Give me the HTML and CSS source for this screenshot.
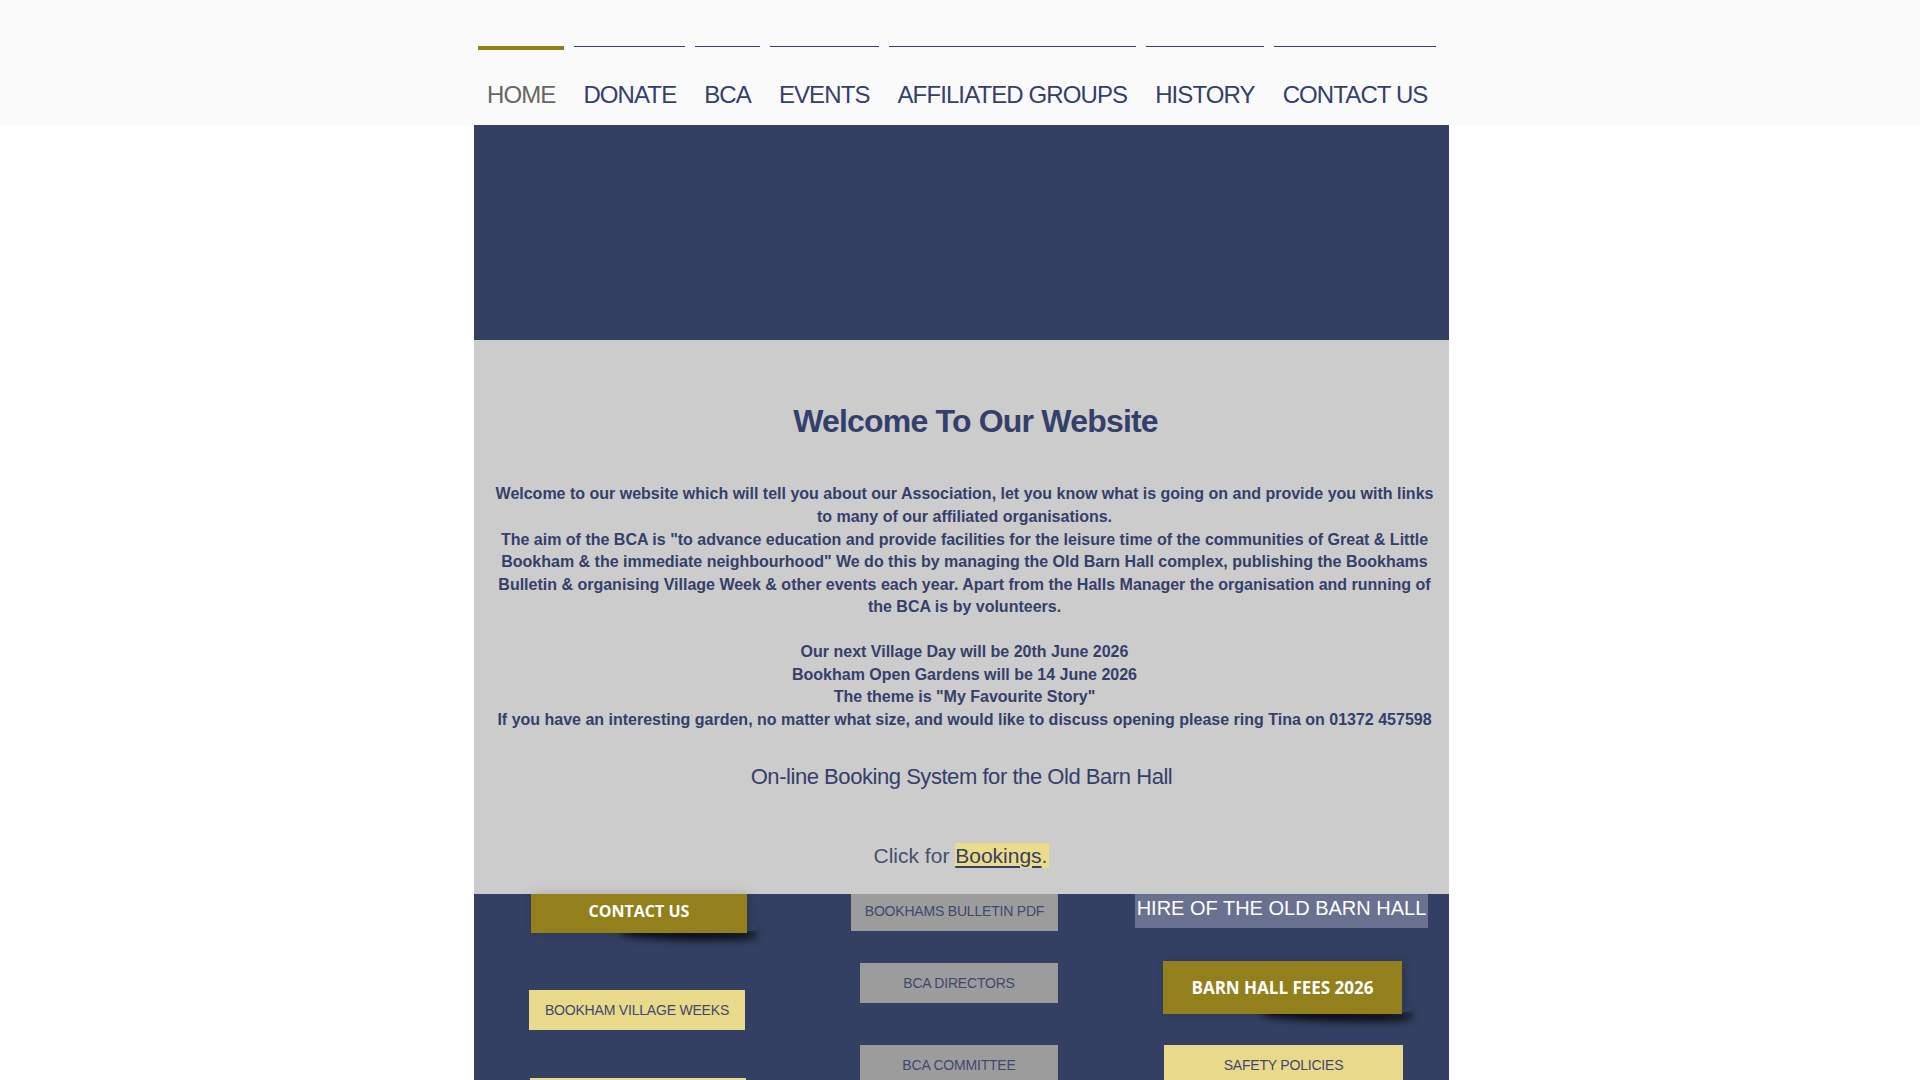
FILE: index.html
```html
<!DOCTYPE html>
<html lang="en">
<head>
<meta charset="utf-8">
<title>Bookham Community Association</title>
<link rel="stylesheet" href="styles.css">
</head>
<body>
<header class="site-header">
  <nav class="nav">
    <a class="nav-item active" href="#">HOME</a>
    <a class="nav-item" href="#">DONATE</a>
    <a class="nav-item" href="#">BCA</a>
    <a class="nav-item" href="#">EVENTS</a>
    <a class="nav-item" href="#">AFFILIATED GROUPS</a>
    <a class="nav-item" href="#">HISTORY</a>
    <a class="nav-item" href="#">CONTACT US</a>
  </nav>
</header>
<main class="page">
  <section class="hero"></section>
  <section class="welcome">
    <h1 class="welcome-title">Welcome To Our Website</h1>
    <p class="intro">Welcome to our website which will tell you about our Association, let you know what is going on and provide you with links<br>to many of our affiliated organisations.<br>The aim of the BCA is "to advance education and provide facilities for the leisure time of the communities of Great &amp; Little<br>Bookham &amp; the immediate neighbourhood" We do this by managing the Old Barn Hall complex, publishing the Bookhams<br>Bulletin &amp; organising Village Week &amp; other events each year. Apart from the Halls Manager the organisation and running of<br>the BCA is by volunteers.<br><br>Our next Village Day will be 20th June 2026<br>Bookham Open Gardens will be 14 June 2026<br>The theme is "My Favourite Story"<br>If you have an interesting garden, no matter what size, and would like to discuss opening please ring Tina on 01372 457598</p>
    <p class="booking-title">On-line Booking System for the Old Barn Hall</p>
    <p class="booking-link">Click for <a class="booking-anchor" href="#">Bookings</a><span class="booking-dot">.</span></p>
  </section>
  <section class="links">
    <div class="col col-1">
      <a class="btn btn-gold btn-contact" href="#">CONTACT US</a>
      <a class="btn btn-yellow btn-weeks" href="#">BOOKHAM VILLAGE WEEKS</a>
      <a class="btn btn-yellow btn-next" href="#"></a>
    </div>
    <div class="col col-2">
      <a class="btn btn-grey btn-bulletin" href="#">BOOKHAMS BULLETIN PDF</a>
      <a class="btn btn-grey btn-directors" href="#">BCA DIRECTORS</a>
      <a class="btn btn-grey btn-committee" href="#">BCA COMMITTEE</a>
    </div>
    <div class="col col-3">
      <div class="hire">HIRE OF THE OLD BARN HALL</div>
      <a class="btn btn-gold btn-fees" href="#">BARN HALL FEES 2026</a>
      <a class="btn btn-yellow btn-safety" href="#">SAFETY POLICIES</a>
    </div>
  </section>
</main>
</body>
</html>
```
FILE: styles.css
```css
html, body {
  margin: 0;
  padding: 0;
  background: #ffffff;
  font-family: "Liberation Sans", Arial, sans-serif;
  overflow: hidden;
}

.site-header {
  background: #fafafa;
  height: 125px;
}

.nav {
  width: 975px;
  margin-left: calc(50% - 486px);
  box-sizing: border-box;
  padding: 46px 0 0 4px;
  display: flex;
  gap: 10px;
}

.nav-item {
  display: block;
  border-top: 1px solid #34406b;
  padding: 33px 9px 0 9px;
  font-size: 24px;
  line-height: 30px;
  letter-spacing: -0.9px;
  color: #34406b;
  text-decoration: none;
  white-space: nowrap;
}

.nav-item.active {
  border-top-color: #937f1b;
  box-shadow: inset 0 3px 0 #937f1b;
  color: #666666;
}

.page {
  width: 975px;
  margin-left: calc(50% - 486px);
}

.hero {
  height: 215px;
  background: #344063;
}

.welcome {
  height: 554px;
  box-sizing: border-box;
  background: #cccccc;
  padding: 62px 10px 0 10px;
  text-align: center;
  color: #34406b;
}

.welcome-title {
  margin: 0;
  padding-left: 28px;
  font-size: 32px;
  line-height: 38.4px;
  letter-spacing: -0.8px;
  font-weight: bold;
}

.intro {
  margin: 43px 0 0 0;
  padding-left: 6px;
  font-size: 16px;
  line-height: 22.55px;
  font-weight: bold;
  white-space: nowrap;
}

.booking-title {
  margin: 32px 0 0 0;
  font-size: 22px;
  line-height: 28.6px;
  letter-spacing: -0.45px;
}

.booking-link {
  margin: 50px 0 0 0;
  font-size: 21px;
  line-height: 28px;
  color: #47506e;
}

.booking-anchor {
  background: #ecdb88;
  color: #34406b;
  text-decoration: underline;
  text-underline-offset: 3px;
  padding: 1px 0;
}

.booking-dot {
  background: #ecdb88;
  padding: 1px 2px 1px 0;
}

.links {
  position: relative;
  z-index: 0;
  height: 300px;
  background: #344063;
  display: flex;
}

.col {
  display: flex;
  flex-direction: column;
  align-items: flex-start;
}

.col-1 {
  width: 320px;
  padding-left: 55px;
  box-sizing: border-box;
}

.col-2 {
  width: 341px;
  padding-left: 57px;
  box-sizing: border-box;
}

.col-3 {
  flex: 1;
}

.btn {
  display: flex;
  align-items: center;
  justify-content: center;
  text-decoration: none;
  box-sizing: border-box;
  white-space: nowrap;
  position: relative;
}

.btn-gold {
  background: #937f1b;
  color: #ffffff;
  font-family: "Open Sans", "Liberation Sans", sans-serif;
  font-weight: bold;
  box-shadow: 2px 0 10px rgba(0, 0, 0, 0.18);
}

.btn-gold::after {
  content: "";
  position: absolute;
  left: 42%;
  right: -10px;
  bottom: 3px;
  height: 10px;
  border-radius: 0 0 60% 40%;
  box-shadow: 0 7px 8px rgba(0, 0, 0, 0.9);
  transform: rotate(2deg);
  transform-origin: left center;
  z-index: -1;
}

.btn-yellow {
  background: #e9d98a;
  color: #3f4870;
  font-size: 14px;
  letter-spacing: -0.2px;
}

.btn-grey {
  background: #9c9c9c;
  color: #3f4870;
  font-size: 14px;
  letter-spacing: -0.2px;
}

.btn-contact {
  margin-left: 2px;
  width: 216px;
  height: 39px;
  font-size: 16px;
  padding-bottom: 5px;
}

.btn-weeks {
  width: 216px;
  height: 40px;
  margin-top: 57px;
}

.btn-next {
  margin-left: 1px;
  width: 216px;
  height: 40px;
  margin-top: 48px;
}

.btn-bulletin {
  width: 207px;
  height: 37px;
  padding-bottom: 3px;
}

.btn-directors {
  margin-left: 9px;
  width: 198px;
  height: 40px;
  margin-top: 32px;
}

.btn-committee {
  margin-left: 9px;
  width: 198px;
  height: 40px;
  margin-top: 42px;
}

.hire {
  width: 293px;
  height: 34px;
  background: #6a7190;
  color: #ffffff;
  font-size: 20px;
  line-height: 24px;
  text-align: center;
  white-space: nowrap;
  padding-top: 2px;
  box-sizing: border-box;
}

.btn-fees {
  margin-left: 28px;
  width: 239px;
  height: 53px;
  margin-top: 33px;
  font-size: 17px;
}

.btn-safety {
  margin-left: 29px;
  width: 239px;
  height: 40px;
  margin-top: 31px;
}
```
